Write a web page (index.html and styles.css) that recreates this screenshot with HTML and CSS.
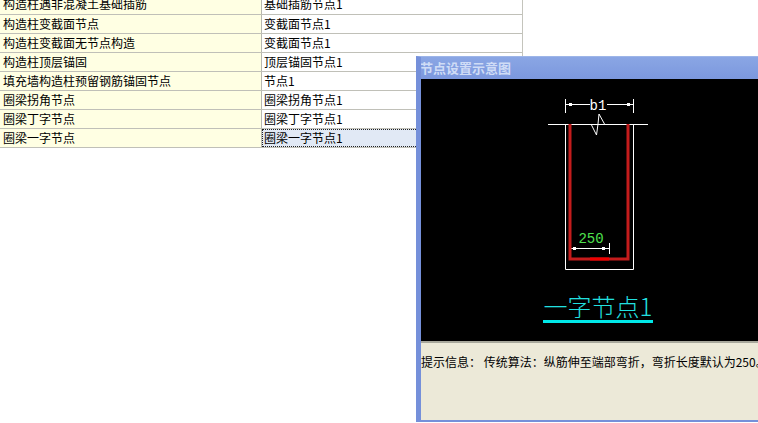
FILE: index.html
```html
<!DOCTYPE html>
<html lang="zh">
<head>
<meta charset="utf-8">
<title>节点设置示意图</title>
<link rel="stylesheet" href="styles.css">
</head>
<body>
<div class="grid">
  <div class="row first"><div class="key"><span>构造柱遇非混凝土基础插筋</span></div><div class="val"><span>基础插筋节点1</span></div></div>
  <div class="row"><div class="key">构造柱变截面节点</div><div class="val">变截面节点1</div></div>
  <div class="row"><div class="key">构造柱变截面无节点构造</div><div class="val">变截面节点1</div></div>
  <div class="row"><div class="key">构造柱顶层锚固</div><div class="val">顶层锚固节点1</div></div>
  <div class="row"><div class="key">填充墙构造柱预留钢筋锚固节点</div><div class="val">节点1</div></div>
  <div class="row"><div class="key">圈梁拐角节点</div><div class="val">圈梁拐角节点1</div></div>
  <div class="row"><div class="key">圈梁丁字节点</div><div class="val">圈梁丁字节点1</div></div>
  <div class="row"><div class="key">圈梁一字节点</div><div class="val selected">圈梁一字节点1</div></div>
</div>
<section class="window">
  <h1 class="titlebar">节点设置示意图</h1>
  <div class="canvas">
    <svg class="drawing" width="337" height="262" viewBox="421 79 337 262">
      <g class="white">
        <path d="M565.500 99V113M633.500 99V113M566 104.500H590M607 104.500H633M548 124.500H648"/>
        <path d="M565.500 124.500V269.500H633.500V124.500"/>
        <path d="M591.500 125L596.500 135L598 124L599 114L604.500 124"/>
        <path d="M570.500 243V254M609.500 243V254M571 248.500H609"/>
      </g>
      <g class="squares">
        <rect x="569" y="103" width="3" height="3"/><rect x="627" y="103" width="3" height="3"/>
        <rect x="573" y="247" width="3" height="3"/><rect x="602" y="247" width="3" height="3"/>
      </g>
      <path class="rebar" d="M570 124V259H628V124"/>
      <path class="rebar-hook" d="M590 259H609"/>
      <text class="dim" x="598" y="110">b1</text>
      <text class="dim green" x="591" y="243">250</text>
      <text class="label" x="598" y="316">一字节点1</text>
      <rect class="underline" x="543" y="320" width="110" height="3"/>
    </svg>
  </div>
  <div class="info">
    <p class="hint">提示信息： 传统算法：纵筋伸至端部弯折，弯折长度默认为250。</p>
  </div>
</section>
</body>
</html>
```
FILE: styles.css
```css
html, body {
  margin: 0;
  padding: 0;
  height: 100%;
  overflow: hidden;
  background: #fff;
}
body {
  font: 12px/18px "Noto Sans CJK SC", "Liberation Sans", sans-serif;
  color: #000;
}
.grid {
  width: 523px;
  border-right: 1px solid #c4c4bc;
  box-sizing: border-box;
}
.row {
  display: grid;
  grid-template-columns: 262px 1fr;
  height: 19px;
  border-bottom: 1px solid #c0c0b8;
  box-sizing: border-box;
}
.row.first {
  height: 15px;
}
.row.first span {
  display: block;
  margin-top: -5px;
}
.key, .val {
  padding-left: 3px;
  overflow: hidden;
  white-space: nowrap;
}
.key {
  background: #ffffe3;
  border-right: 1px solid #b8b8b0;
}
.val {
  padding-left: 2px;
}
.val.selected {
  background: #e1e9f5;
  outline: 1px dotted #222;
  outline-offset: -1px;
}
.window {
  position: absolute;
  left: 416px;
  top: 56px;
  width: 342px;
  height: 366px;
  box-sizing: border-box;
  display: flex;
  flex-direction: column;
  border-left: 5px solid #7590da;
  border-top: 1px solid #9db5e8;
  border-bottom: 2px solid #7590da;
  background: #ece9d8;
  overflow: hidden;
}
.titlebar {
  margin: 0 0 0 -5px;
  height: 22px;
  padding-left: 4px;
  flex: none;
  font-size: 13px;
  line-height: 22px;
  font-weight: 700;
  color: #cfdcf6;
  background: linear-gradient(to bottom, #8aa6e4, #7c98de);
}
.canvas {
  flex: none;
  height: 262px;
  background: #000;
  border-bottom: 2px solid #a8a89c;
}
.drawing {
  display: block;
}
.white path {
  fill: none;
  stroke: #fff;
  stroke-width: 1;
}
.squares rect {
  fill: #fff;
}
.rebar {
  fill: none;
  stroke: #c41c1c;
  stroke-width: 3;
}
.rebar-hook {
  stroke: #f00000;
  stroke-width: 3;
}
.dim {
  font: 14px "Liberation Mono", monospace;
  fill: #fff;
  text-anchor: middle;
}
.dim.green {
  fill: #4ee04e;
}
.label {
  font: 300 24px "Noto Sans CJK SC", sans-serif;
  fill: #22e0e0;
  text-anchor: middle;
}
.underline {
  fill: #00e8e8;
}
.info {
  flex: 1;
}
.hint {
  margin: 10px 0 0;
  white-space: nowrap;
}
```
